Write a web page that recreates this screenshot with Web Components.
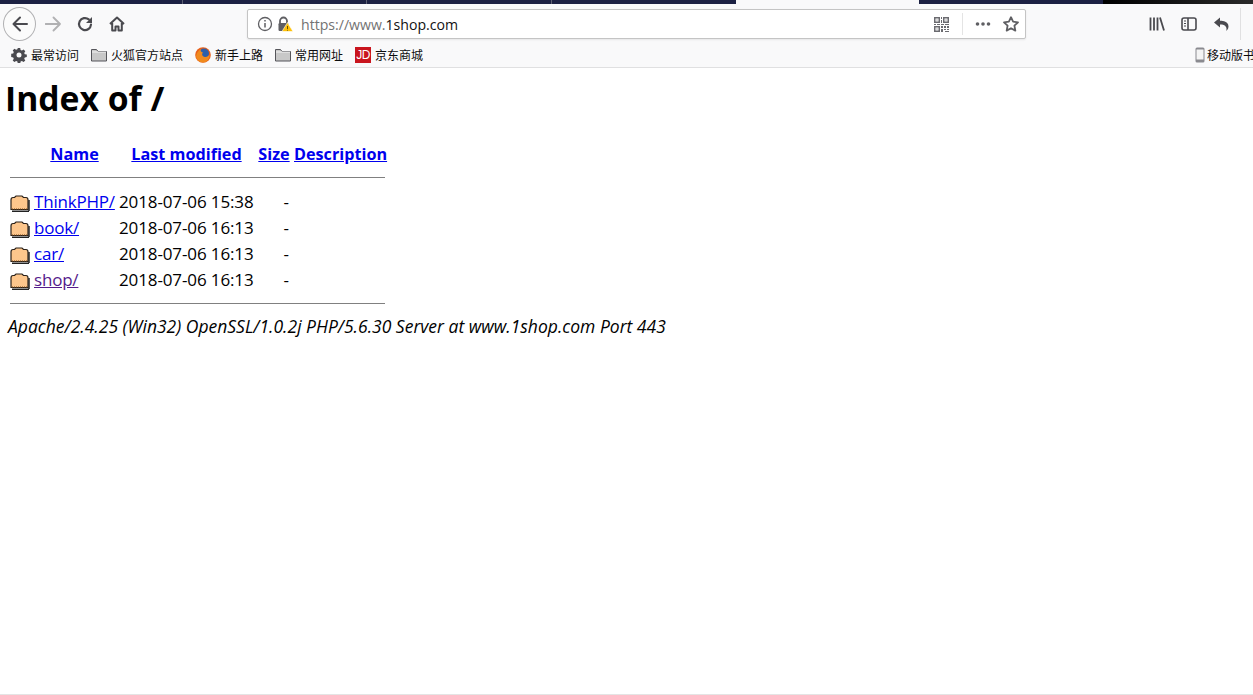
<!DOCTYPE html>
<html>
<head>
<meta charset="utf-8">
<title>Index of /</title>
<style>
  html, body { margin: 0; padding: 0; height: 100%; background: #fff; overflow: hidden; }
  body { display: flex; flex-direction: column; font-family: "Open Sans", "Noto Sans CJK SC", sans-serif; }
</style>
</head>
<body>
<template id="tab-strip-tpl">
  <style>
    :host { display: flex; height: 4px; background: #1c2143; flex-shrink: 0; }
    i { display: block; height: 4px; }
    .s { width: 1px; background: #5d6073; margin-left: 182px; }
    .s.l { margin-left: 184px; }
    .cur { width: 183px; background: #f9f9fa; margin-left: 184px; }
    .f { width: 150px; margin-left: 184px; background: linear-gradient(90deg, #000, #2a2a2a); }
  </style>
  <i class="s"></i><i class="s" style="margin-left:183px"></i><i class="s l"></i><i class="cur"></i><i class="f"></i>
</template>

<template id="nav-bar-tpl">
  <style>
    :host { display: flex; align-items: center; height: 40px; background: #f9f9fa; flex-shrink: 0; padding-left: 3px; box-sizing: border-box; font-family: "Open Sans", "Noto Sans CJK SC", sans-serif; }
    svg { display: block; flex-shrink: 0; }
    .back { width: 33px; height: 34px; border: 1px solid #b1b1b3; border-radius: 50%; background: #fbfbfb; box-sizing: border-box; display: flex; align-items: center; justify-content: center; margin-right: 9px; }
    .btn { width: 16px; height: 16px; margin-right: 16px; }
    .url { margin-left: 122px; width: 779px; flex-shrink: 0; height: 30px; box-sizing: border-box; border: 1px solid #c4c4c4; border-radius: 2px; background: #fff; display: flex; align-items: center; padding: 0 6px 0 9px; box-shadow: 0 1px 2px rgba(0,0,0,.08); }
    .addr { margin-left: 8px; font-size: 14.1px; color: #737373; flex: 1; white-space: nowrap; }
    .addr b { font-weight: 400; color: #111; }
    .sep { width: 1px; height: 22px; background: #e4e4e4; margin: 0 12px 0 13px; }
    .right { display: flex; align-items: center; gap: 16px; margin-left: 123px; }
    .vline { width: 1px; height: 32px; background: #e0e0e1; margin-left: -5px; }
  </style>
  <div class="back">
    <svg width="18" height="18" viewBox="0 0 18 18" fill="none" stroke="#4a4a4f" stroke-width="2" stroke-linecap="round" stroke-linejoin="round"><path d="M16 9H2.500M9 2.500L2.500 9 9 15.500"/></svg>
  </div>
  <svg class="btn" viewBox="0 0 16 16" fill="none" stroke="#b1b1b3" stroke-width="1.800" stroke-linecap="round" stroke-linejoin="round"><path d="M0.500 8H15M8.500 1.500L15 8l-6.500 6.500"/></svg>
  <svg class="btn" viewBox="0 0 16 16" fill="none" stroke="#4a4a4f" stroke-width="2.200" stroke-linecap="round"><path d="M14 8.500A6 6 0 1 1 11.800 3.400"/><path d="M15 1v6H9z" fill="#4a4a4f" stroke="none"/></svg>
  <svg class="btn" viewBox="0 0 16 16" fill="none" stroke="#4a4a4f" stroke-width="2" stroke-linejoin="round" style="margin-right:0"><path d="M1 8L8 1.500 15 8M3.200 7v7.500h3.300v-4h3v4h3.300V7"/></svg>
  <div class="url">
    <svg width="16" height="16" viewBox="0 0 16 16" fill="none" stroke="#5f5f63" stroke-width="1.300"><circle cx="8" cy="8" r="6.500"/><path d="M8 7v4.500M8 4v1.600" stroke-width="1.500"/></svg>
    <svg width="16" height="16" viewBox="0 0 16 16" style="margin-left:4px"><path d="M3 7.500V5a3.500 3.500 0 0 1 7 0v2" fill="none" stroke="#5f5f63" stroke-width="1.800"/><rect x="1.500" y="7" width="10" height="8" rx="1.200" fill="#5f5f63"/><path d="M10.500 6.500L16 15.500H5z" fill="#ffc20a" stroke="#fff" stroke-width=".6"/><path d="M10.500 10v3M10.500 13.800v.8" stroke="#5a4400" stroke-width=".9"/></svg>
    <div class="addr">https://www.<b>1shop.com</b></div>
    <svg width="15" height="15" viewBox="0 0 15 15" fill="#6b6b70"><path fill-rule="evenodd" d="M0 0h6v6H0zM1.500 1.500v3h3v-3zM9 0h6v6H9zM10.500 1.500v3h3v-3zM0 9h6v6H0zM1.500 10.500v3h3v-3zM2.500 2.500h1v1h-1zM11.500 2.500h1v1h-1zM2.500 11.500h1v1h-1z"/><path d="M7 0h1v2H7zM7 3h1v3H7zM0 7h2v1H0zM3 7h3v1H3zM7 7h3v1H7zM11 7h4v1h-4zM7 9h2v2H7zM10 9h2v2h-2zM13 9h2v2h-2zM7 12h2v3H7zM10 12h2v1h-2zM11 14h4v1h-4zM13 12h2v1h-2z"/></svg>
    <div class="sep"></div>
    <svg width="16" height="16" viewBox="0 0 16 16" fill="#5f5f63" style="margin-right:12px"><circle cx="2.500" cy="8" r="1.800"/><circle cx="8" cy="8" r="1.800"/><circle cx="13.500" cy="8" r="1.800"/></svg>
    <svg width="16" height="16" viewBox="0 0 16 16" fill="none" stroke="#5f5f63" stroke-width="1.800" stroke-linejoin="round"><path d="M8 1.200l2.100 4.500 4.900.6-3.600 3.400.95 4.900L8 12.200l-4.350 2.400.95-4.900L1 6.300l4.900-.6z"/></svg>
  </div>
  <div class="right">
    <svg width="16" height="16" viewBox="0 0 16 16" fill="none" stroke="#4a4a4f" stroke-width="1.800"><path d="M1.500 1.500v13M5 1.500v13M8.500 1.500v13M11 1.500l4 13"/></svg>
    <svg width="16" height="16" viewBox="0 0 16 16" fill="none" stroke="#4a4a4f" stroke-width="1.600"><rect x="1" y="2" width="14" height="12" rx="2"/><path d="M7 2v12"/><path d="M3 5h2M3 7.500h2M3 10h2" stroke-width="1"/></svg>
    <svg width="16" height="16" viewBox="0 0 16 16" fill="#4a4a4f"><path d="M7 1.500L1 6.500l6 5V8.500c3 0 5 .6 6 2.500.8 1.400.6 3 0 4 2.200-1.500 3-4 2.200-6.300C14.300 6 11 4.800 7 4.800z"/></svg>
    <div class="vline"></div>
  </div>
</template>

<template id="bookmark-bar-tpl">
  <style>
    :host { display: flex; align-items: center; height: 23px; box-sizing: content-box; background: #f9f9fa; border-bottom: 1px solid #e0e0e1; flex-shrink: 0; padding-left: 11px; overflow: hidden; font: 12px/16px "Noto Sans CJK SC", sans-serif; color: #0c0c0d; white-space: nowrap; }
    .inner { display: contents; }
  </style>
  <slot></slot>
</template>

<template id="book-mark-tpl">
  <style>
    :host { display: flex; align-items: center; gap: 4px; margin: -2px 12px 0 0; flex-shrink: 0; }
    svg, .jd { display: block; flex-shrink: 0; width: 16px; height: 16px; }
    .jd { background: #c9151e; color: #fff; font: 400 12px/16px "Liberation Sans", sans-serif; text-align: center; letter-spacing: -.5px; }
    :host([icon=phone]) { gap: 2px; margin-left: auto; margin-right: -14px; }
    :host([icon=phone]) svg { width: 10px; }
  </style>
  <span id="ic" style="display:contents"></span><span><slot></slot></span>
</template>

<template id="dir-row-tpl">
  <style>
    :host { display: grid; grid-template-columns: 20px 81px 135px 32px 92px; column-gap: 4px; align-items: center; height: 26px; margin-left: 10px; white-space: nowrap; }
    a { color: #0000ee; text-decoration: underline; letter-spacing: -.2px; }
    :host([visited]) a { color: #551a8b; }
    .date { letter-spacing: -.12px; }
    .size { text-align: right; padding-right: 1px; }
    svg { display: block; margin-top: 2px; }
  </style>
  <svg width="20" height="19" viewBox="0 0 20 19"><path d="M1 15.500V6Q1 3.500 3 3.500h1.500L6 2h6l1.500 1.500H16Q18 3.500 18 6v9.500z" fill="#fdc68c" stroke="#2a2018" stroke-width="1.200"/><path d="M2 16.500h17V18H2z" fill="#222"/><path d="M19 6v11" stroke="#222" stroke-width="1.500"/><path d="M2 15h16" stroke="#7a4a1a" stroke-dasharray="1 1"/></svg>
  <a href="#"><slot></slot></a>
  <span class="date"><slot name="date"></slot></span>
  <span class="size">-</span>
</template>

<template id="dir-index-tpl">
  <style>
    :host { display: block; flex: 1; font: 17px/26px "Open Sans", "Noto Sans CJK SC", sans-serif; color: #000; }
    h1 { font-size: 33.7px; line-height: 44px; font-weight: 700; margin: 0; padding: 8px 0 0 5px; height: 52px; box-sizing: border-box; }
    .head { display: grid; grid-template-columns: 20px 81px 135px 32px 92px; column-gap: 4px; margin: 21px 0 0 10px; font-size: 16.2px; font-weight: 700; height: 26px; align-items: center; text-align: center; white-space: nowrap; }
    .head a { color: #0000ee; text-decoration: underline; }
    .rule { width: 375px; height: 1px; background: #808080; margin-left: 10px; }
    .top { margin-top: 10px; margin-bottom: 11px; }
    .bot { margin-top: 10px; }
    address { font-style: italic; font-size: 17.5px; margin: 9px 0 0 8px; white-space: nowrap; }
  </style>
  <h1>Index of /</h1>
  <div class="head">
    <span></span>
    <a href="#">Name</a>
    <a href="#">Last modified</a>
    <a href="#">Size</a>
    <a href="#">Description</a>
  </div>
  <div class="rule top"></div>
  <slot></slot>
  <div class="rule bot"></div>
  <address>Apache/2.4.25 (Win32) OpenSSL/1.0.2j PHP/5.6.30 Server at www.1shop.com Port 443</address>
</template>

<template id="status-line-tpl">
  <style>:host { display: block; height: 1px; background: #e4e4e4; flex-shrink: 0; }</style>
</template>

<tab-strip></tab-strip>
<nav-bar></nav-bar>
<bookmark-bar>
  <book-mark icon="gear">最常访问</book-mark>
  <book-mark icon="folder">火狐官方站点</book-mark>
  <book-mark icon="fox">新手上路</book-mark>
  <book-mark icon="folder">常用网址</book-mark>
  <book-mark icon="jd">京东商城</book-mark>
  <book-mark icon="phone">移动版书签</book-mark>
</bookmark-bar>
<dir-index>
  <dir-row>ThinkPHP/<span slot="date">2018-07-06 15:38</span></dir-row>
  <dir-row>book/<span slot="date">2018-07-06 16:13</span></dir-row>
  <dir-row>car/<span slot="date">2018-07-06 16:13</span></dir-row>
  <dir-row visited>shop/<span slot="date">2018-07-06 16:13</span></dir-row>
</dir-index>
<status-line></status-line>

<script>
function plain(name) {
  customElements.define(name, class extends HTMLElement {
    constructor() {
      super();
      this.attachShadow({ mode: 'open' });
      this.shadowRoot.appendChild(document.getElementById(name + '-tpl').content.cloneNode(true));
    }
  });
}
['tab-strip', 'nav-bar', 'bookmark-bar', 'dir-row', 'dir-index', 'status-line'].forEach(plain);

const ICONS = {
  gear: '<svg viewBox="0 0 16 16"><path fill="#4a4a4f" fill-rule="evenodd" d="M6.800 1h2.400l.4 2 1.300.6 1.700-1.100 1.700 1.700-1.100 1.700.6 1.300 2 .4v2.400l-2 .4-.6 1.300 1.100 1.700-1.700 1.700-1.700-1.100-1.300.6-.4 2H6.800l-.4-2-1.300-.6-1.700 1.100-1.700-1.700 1.100-1.700-.6-1.300-2-.4V6.800l2-.4.6-1.300-1.100-1.700 1.700-1.700 1.700 1.100 1.300-.6zM8 5.500a2.500 2.500 0 1 0 0 5 2.500 2.500 0 0 0 0-5z"/></svg>',
  folder: '<svg viewBox="0 0 16 16"><path d="M.5 14V2.500h5l1.500 2h8.500V14z" fill="#c8c8c8" stroke="#55555a"/><path d="M1 5h14" stroke="#fff" stroke-width=".8"/></svg>',
  fox: '<svg viewBox="0 0 16 16"><circle cx="8" cy="8" r="7.800" fill="#e8601a"/><circle cx="9" cy="6.500" r="5" fill="#2d5fa8"/><path d="M1 9c1-4 3-6 5-7-1 2 0 3 2 3.500C6.500 7 7 9.500 10 10c2 .2 3.500-1 4.500-2.500C14.800 12 11.500 15.500 8 15.500 4 15.500 1.500 12.500 1 9z" fill="#f08a1d"/></svg>',
  jd: '<div class="jd">JD</div>',
  phone: '<svg viewBox="0 0 10 16" preserveAspectRatio="none"><rect x=".5" y=".5" width="9" height="15" rx="1.500" fill="#8a8a8f"/><rect x="1.500" y="2.500" width="7" height="10" fill="#f4f4f4"/></svg>'
};

customElements.define('book-mark', class extends HTMLElement {
  constructor() {
    super();
    this.attachShadow({ mode: 'open' });
    this.shadowRoot.appendChild(document.getElementById('book-mark-tpl').content.cloneNode(true));
  }
  connectedCallback() {
    this.shadowRoot.getElementById('ic').innerHTML = ICONS[this.getAttribute('icon')] || '';
  }
});
</script>
</body>
</html>
